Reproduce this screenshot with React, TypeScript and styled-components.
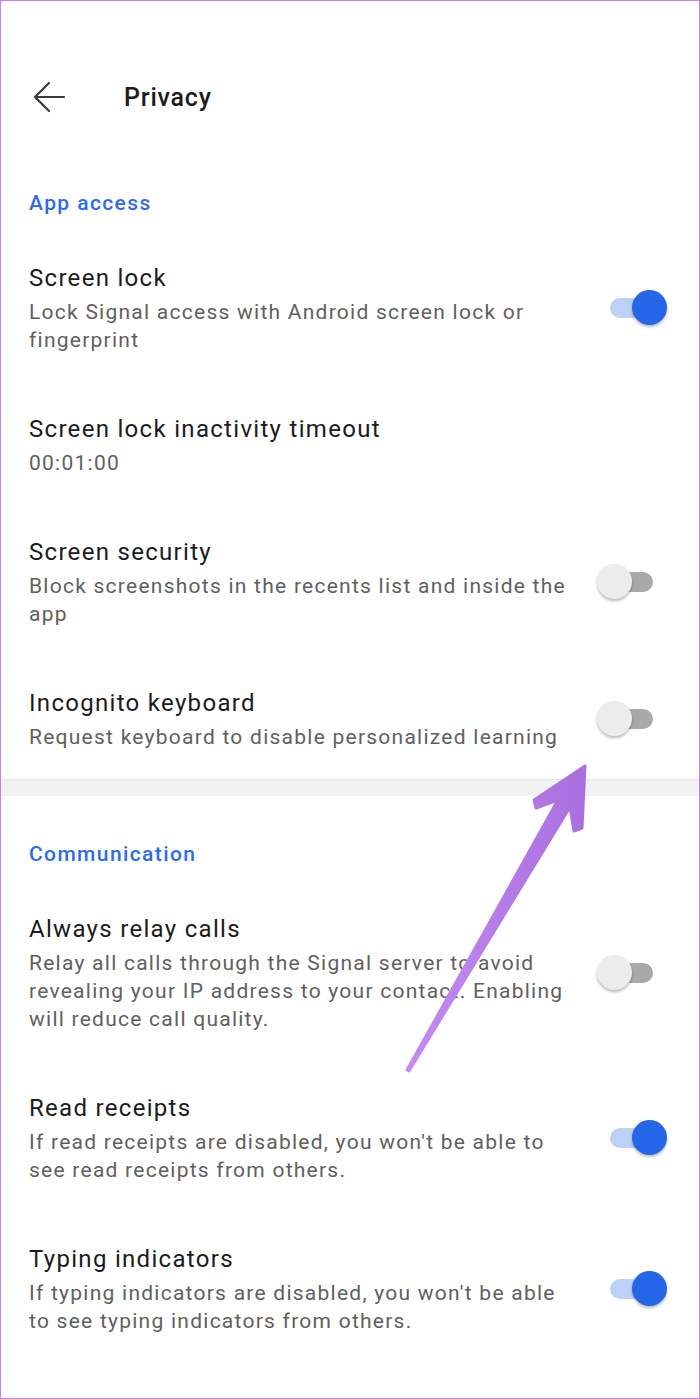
import styled, { createGlobalStyle } from "styled-components";

const GlobalStyle = createGlobalStyle`
  html, body {
    margin: 0;
    padding: 0;
    background: #ffffff;
  }
  body {
    font-family: Roboto, "Noto Sans", "Liberation Sans", sans-serif;
    -webkit-font-smoothing: antialiased;
  }
`;

const Screen = styled.div`
  position: relative;
  width: 700px;
  min-height: 1399px;
  box-sizing: border-box;
  border: 1px solid #c880f0;
  background: #ffffff;
  overflow: hidden;
`;

const Toolbar = styled.header`
  display: flex;
  align-items: center;
  height: 56px;
  margin-top: 68px;
  padding-left: 31px;
`;

const BackButton = styled.button`
  display: flex;
  align-items: center;
  justify-content: center;
  width: 34px;
  height: 34px;
  padding: 0;
  border: none;
  background: none;
  color: #3a3a3a;
`;

const Title = styled.h1`
  margin: 0 0 0 58px;
  font-size: 25px;
  font-weight: 500;
  color: #1c1c1c;
  letter-spacing: 0.8px;
`;

const Section = styled.section<{ $top: number }>`
  padding-top: ${(p) => p.$top}px;
`;

const SectionLabel = styled.h2`
  margin: 0 0 16px;
  padding-left: 28px;
  font-size: 21px;
  line-height: 28px;
  font-weight: 500;
  letter-spacing: 1.4px;
  color: #2c6bed;
`;

const Row = styled.div`
  display: flex;
  align-items: center;
  padding: 29px 33px 30px 28px;
`;

const RowText = styled.div`
  flex: 1;
  min-width: 0;
`;

const RowTitle = styled.div`
  font-size: 24px;
  line-height: 32px;
  letter-spacing: 1.3px;
  color: #1b1b1d;
`;

const RowSummary = styled.div`
  margin-top: 4px;
  font-size: 21px;
  line-height: 28px;
  letter-spacing: 1.25px;
  color: #606060;
`;

const SwitchBox = styled.div`
  position: relative;
  flex: none;
  width: 69px;
  height: 36px;
  margin-left: 27px;
`;

const Track = styled.div<{ $on: boolean }>`
  position: absolute;
  left: 13px;
  top: 8px;
  width: 43px;
  height: 20px;
  border-radius: 10px;
  background: ${(p) => (p.$on ? "#bdd0f7" : "#a9a9a9")};
`;

const Thumb = styled.div<{ $on: boolean }>`
  position: absolute;
  top: 0;
  left: ${(p) => (p.$on ? "35px" : "0px")};
  width: 35px;
  height: 35px;
  border-radius: 50%;
  background: ${(p) => (p.$on ? "#2366e8" : "#ececec")};
  box-shadow: 0 2px 3px rgba(0, 0, 0, 0.28);
`;

const Divider = styled.div`
  height: 16px;
  margin-top: -2px;
  border-top: 1px solid #e6e6e6;
  background: #f2f2f2;
`;

const Pointer = styled.svg`
  position: absolute;
  left: 0;
  top: 0;
  pointer-events: none;
`;

interface SwitchProps {
  on: boolean;
}

const Switch: React.FC<SwitchProps> = ({ on }) => (
  <SwitchBox>
    <Track $on={on} />
    <Thumb $on={on} />
  </SwitchBox>
);

interface SettingProps {
  title: string;
  summary: string;
  toggle?: boolean;
}

const Setting: React.FC<SettingProps> = ({ title, summary, toggle }) => (
  <Row>
    <RowText>
      <RowTitle>{title}</RowTitle>
      <RowSummary>{summary}</RowSummary>
    </RowText>
    {toggle !== undefined && <Switch on={toggle} />}
  </Row>
);

const appAccess: SettingProps[] = [
  {
    title: "Screen lock",
    summary: "Lock Signal access with Android screen lock or fingerprint",
    toggle: true,
  },
  { title: "Screen lock inactivity timeout", summary: "00:01:00" },
  {
    title: "Screen security",
    summary: "Block screenshots in the recents list and inside the app",
    toggle: false,
  },
  {
    title: "Incognito keyboard",
    summary: "Request keyboard to disable personalized learning",
    toggle: false,
  },
];

const communication: SettingProps[] = [
  {
    title: "Always relay calls",
    summary:
      "Relay all calls through the Signal server to avoid revealing your IP address to your contact. Enabling will reduce call quality.",
    toggle: false,
  },
  {
    title: "Read receipts",
    summary:
      "If read receipts are disabled, you won't be able to see read receipts from others.",
    toggle: true,
  },
  {
    title: "Typing indicators",
    summary:
      "If typing indicators are disabled, you won't be able to see typing indicators from others.",
    toggle: true,
  },
];

export default function App() {
  return (
    <>
      <GlobalStyle />
      <Screen>
        <Toolbar>
          <BackButton aria-label="Back">
            <svg width="34" height="34" viewBox="0 0 34 34" fill="none">
              <path
                d="M32 17H3M17 3L3 17l14 14"
                stroke="currentColor"
                strokeWidth="2.2"
                strokeLinecap="round"
                strokeLinejoin="round"
              />
            </svg>
          </BackButton>
          <Title>Privacy</Title>
        </Toolbar>

        <Section $top={64}>
          <SectionLabel>App access</SectionLabel>
          {appAccess.map((s) => (
            <Setting key={s.title} {...s} />
          ))}
        </Section>

        <Divider />

        <Section $top={44}>
          <SectionLabel>Communication</SectionLabel>
          {communication.map((s) => (
            <Setting key={s.title} {...s} />
          ))}
        </Section>

        <Pointer width="700" height="1399" viewBox="0 0 700 1399">
          <defs>
            <linearGradient id="pointerFill" x1="0" y1="0" x2="1" y2="0">
              <stop offset="0" stopColor="#c48cf2" />
              <stop offset="1" stopColor="#a96fdf" />
            </linearGradient>
          </defs>
          <path
            d="M584 765 L581 827 L573 830 L569 806 L408 1070 L406 1069 L557 799 L535 807 L533 799 Z"
            fill="url(#pointerFill)"
            stroke="url(#pointerFill)"
            strokeWidth="3"
            strokeLinejoin="round"
          />
        </Pointer>
      </Screen>
    </>
  );
}
